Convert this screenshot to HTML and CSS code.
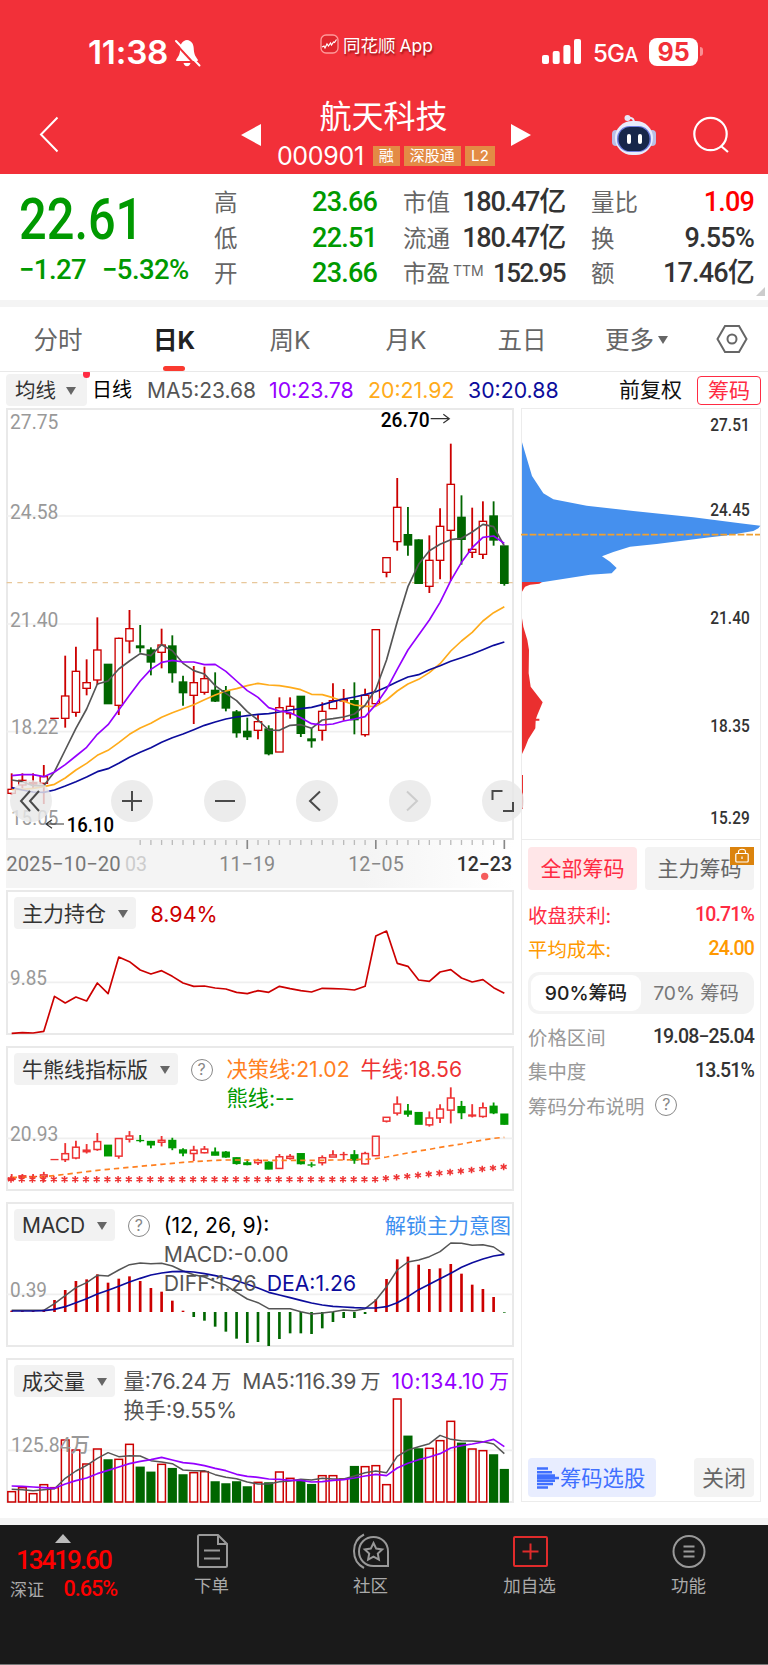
FILE: index.html
```html
<!DOCTYPE html>
<html lang="zh-CN">
<head>
    <meta charset="UTF-8">
    <meta name="viewport" content="width=device-width, initial-scale=1.0">
    <title>航天科技 000901</title>
    <link rel="stylesheet" href="styles.css">
</head>
<body>
    <header>
        <div class="status-bar">
            <div class="status-time">
                <span class="clock">11:38</span>
                <svg width="27" height="30" viewBox="0 0 27 30">
                    <path d="M13 2C8.500 2.500 6.500 6 6.300 10c-.2 6-1.500 8-4 11.500-.5 1 0 1.500 1 1.500h19.400c1 0 1.500-.5 1-1.500-2.500-3.500-3.800-5.500-4-11.500C19.500 6 17.500 2.500 13 2z" fill="#fff"/>
                    <path d="M9.500 25h7c-.5 2-1.500 3.200-3.500 3.200S10 27 9.500 25z" fill="#fff"/>
                    <path d="M1 5L23 29" stroke="#f23039" stroke-width="2"/>
                    <path d="M2 3L25.500 27.500" stroke="#fff" stroke-width="2" stroke-linecap="round"/>
                </svg>
            </div>
            <div class="status-app">
                <svg width="19" height="20" viewBox="0 0 19 20">
                    <rect x="1" y="1" width="17" height="18" rx="5" fill="#e0262e" stroke="#ff9a9a" stroke-width="1.300"/>
                    <path d="M2 13l2-1 1 2 2-4 1.500 2 2-3 1 2 2-3 1 .5 2-3" fill="none" stroke="#fff" stroke-width="1.200"/>
                </svg>
                <span>同花顺 App</span>
            </div>
            <div class="status-right">
                <svg width="40" height="26" viewBox="0 0 40 26" fill="#fff">
                    <rect x="0" y="16" width="7" height="9" rx="2"/>
                    <rect x="10.700" y="12" width="7" height="13" rx="2"/>
                    <rect x="21.400" y="6" width="7" height="19" rx="2"/>
                    <rect x="32" y="0" width="7" height="25" rx="2"/>
                </svg>
                <span class="net">5G<small>A</small></span>
                <span class="battery">95</span>
                <i class="battery-cap"></i>
            </div>
        </div>

        <nav class="title-bar">
            <svg class="back" width="20" height="37" viewBox="0 0 20 37"><path d="M18.500 1.500L2 18.500l16.500 17" fill="none" stroke="#fff" stroke-width="2"/></svg>
            <div class="stock">
                <i class="prev"></i>
                <div class="stock-name">
                    <h1>航天科技</h1>
                    <div class="stock-code">
                        <span class="code">000901</span>
                        <span class="tag">融</span>
                        <span class="tag">深股通</span>
                        <span class="tag">L2</span>
                    </div>
                </div>
                <i class="next"></i>
            </div>
            <div class="actions">
                <svg width="44" height="42" viewBox="0 0 44 42">
                    <circle cx="15.500" cy="4" r="3" fill="#e6e8f8"/>
                    <path d="M16 4c5-1 6 2 6 5" fill="none" stroke="#e6e8f8" stroke-width="2"/>
                    <rect x="0" y="16" width="8" height="16" rx="4" fill="#b9bfe6"/>
                    <rect x="36" y="16" width="8" height="16" rx="4" fill="#b9bfe6"/>
                    <rect x="3" y="7" width="38" height="34" rx="17" fill="#e9ecfb"/>
                    <rect x="5" y="12" width="34" height="26" rx="12.500" fill="#6f7fe0"/>
                    <rect x="6.500" y="13" width="31" height="24" rx="11.500" fill="#17264a"/>
                    <rect x="15" y="20" width="4" height="10" rx="2" fill="#fff"/>
                    <rect x="26" y="20" width="4" height="10" rx="2" fill="#fff"/>
                </svg>
                <svg width="38" height="38" viewBox="0 0 38 38" fill="none" stroke="#fff" stroke-width="2.200">
                    <circle cx="17.500" cy="18" r="16.200"/>
                    <path d="M28 30l7 6"/>
                </svg>
            </div>
        </nav>
    </header>

    <section class="quote">
        <div class="price">
            <div class="last"><span>22.61</span></div>
            <div class="change"><span>−1.27</span><span>−5.32%</span></div>
        </div>
        <dl class="facts c1">
            <dt>高</dt><dd class="down">23.66</dd>
            <dt>低</dt><dd class="down">22.51</dd>
            <dt>开</dt><dd class="down">23.66</dd>
        </dl>
        <dl class="facts c2">
            <dt>市值</dt><dd>180.47亿</dd>
            <dt>流通</dt><dd>180.47亿</dd>
            <dt>市盈<sup>TTM</sup></dt><dd>152.95</dd>
        </dl>
        <dl class="facts c3">
            <dt>量比</dt><dd class="up">1.09</dd>
            <dt>换</dt><dd>9.55%</dd>
            <dt>额</dt><dd>17.46亿</dd>
        </dl>
        <i class="corner"></i>
    </section>

    <nav class="tabs">
        <span>分时</span>
        <span class="active">日K</span>
        <span>周K</span>
        <span>月K</span>
        <span>五日</span>
        <span>更多<i class="caret"></i></span>
        <svg width="32" height="30" viewBox="0 0 32 30" fill="none" stroke="#666" stroke-width="2">
            <path d="M9 2h14l7.500 13L23 28H9L1.500 15z"/>
            <circle cx="16" cy="15" r="4.500"/>
        </svg>
    </nav>

    <div class="ma-row">
        <span class="select">均线<i class="caret"></i></span>
        <i class="new-dot"></i>
        <span class="period">日线</span>
        <span class="ma5">MA5:23.68</span>
        <span class="ma10">10:23.78</span>
        <span class="ma20">20:21.92</span>
        <span class="ma30">30:20.88</span>
        <span class="adjust">前复权</span>
        <span class="chips-btn">筹码</span>
    </div>

    <main>
        <div class="charts">
            <div class="panel kline">
                <svg id="kline" viewBox="18 24 1524 1296"></svg>
                <div class="tools">
                    <button><svg viewBox="0 0 42 42"><path d="M20 11L11 21l9 10M29 11l-9 10 9 10"/></svg></button>
                    <button><svg viewBox="0 0 42 42"><path d="M21 11v20M11 21h20"/></svg></button>
                    <button><svg viewBox="0 0 42 42"><path d="M11 21h20"/></svg></button>
                    <button><svg viewBox="0 0 42 42"><path d="M24 11.500L14 21l10 9.500"/></svg></button>
                    <button class="off"><svg viewBox="0 0 42 42"><path d="M18 11.500L28 21l-10 9.500"/></svg></button>
                    <button><svg viewBox="0 0 42 42"><path d="M10.500 20v-9h10M31 22v9H21"/></svg></button>
                </div>
            </div>
            <div class="dates">
                <svg id="dates" viewBox="18 1320 1524 144"></svg>
            </div>

            <div class="panel sub">
                <svg id="position" viewBox="18 30 1524 435"></svg>
                <div class="panel-head">
                    <span class="select">主力持仓<i class="caret"></i></span>
                    <span class="legend holding">8.94%</span>
                </div>
            </div>

            <div class="panel sub">
                <svg id="bullbear" viewBox="18 18 1524 435"></svg>
                <div class="panel-head">
                    <span class="select">牛熊线指标版<i class="caret"></i></span>
                    <i class="help">?</i>
                    <div class="legend bull">
                        <div><span class="decision">决策线:21.02</span><span class="bull-line">牛线:18.56</span></div>
                        <div><span class="bear-line">熊线:--</span></div>
                    </div>
                </div>
            </div>

            <div class="panel sub">
                <svg id="macd" viewBox="18 21 1524 435"></svg>
                <div class="panel-head">
                    <span class="select">MACD<i class="caret"></i></span>
                    <i class="help">?</i>
                    <div class="legend macd">
                        <div class="params">(12, 26, 9):</div>
                        <div>MACD:-0.00</div>
                        <div><span>DIFF:1.26</span><span class="ma30">DEA:1.26</span></div>
                    </div>
                    <span class="unlock">解锁主力意图</span>
                </div>
            </div>

            <div class="panel sub">
                <svg id="volume" viewBox="18 24 1524 435"></svg>
                <div class="panel-head">
                    <span class="select">成交量<i class="caret"></i></span>
                    <div class="legend vol">
                        <div><span>量:76.24<b>万</b></span><span>MA5:116.39<b>万</b></span><span class="ma10">10:134.10<b>万</b></span></div>
                        <div>换手:9.55%</div>
                    </div>
                </div>
            </div>
        </div>

        <aside class="chips">
            <svg id="chips" viewBox="33 24 720 1296"></svg>
            <div class="chips-body">
                <div class="scope">
                    <span class="on">全部筹码</span>
                    <span>主力筹码<i class="lock"><svg width="14" height="15" viewBox="0 0 14 15" fill="none" stroke="#fff" stroke-width="1.200"><rect x=".8" y="5.500" width="12.400" height="8.500" rx="1"/><path d="M3.500 5.500V3.800C3.500.4 10.500.4 10.500 3.800v1.700M7 8.500v2.500"/></svg></i></span>
                </div>
                <div class="row profit"><span>收盘获利:</span><em>10.71%</em></div>
                <div class="row cost"><span>平均成本:</span><em>24.00</em></div>
                <div class="segment"><span class="on">90%筹码</span><span>70% 筹码</span></div>
                <div class="row"><span>价格区间</span><em>19.08−25.04</em></div>
                <div class="row"><span>集中度</span><em>13.51%</em></div>
                <div class="row note"><span>筹码分布说明</span><i class="help">?</i></div>
                <div class="chips-foot">
                    <span class="pick">
                        <svg width="23" height="22" viewBox="0 0 23 22" stroke="#4070ff" stroke-width="2.400">
                            <path d="M0 1.500h11M0 5.200h15M0 8.500h18M0 11h22M0 13.800h18M0 17h16M0 20.500h11"/>
                        </svg>筹码选股</span>
                    <span class="close">关闭</span>
                </div>
            </div>
        </aside>
    </main>

    <footer>
        <div class="index">
            <i class="up-arrow"></i>
            <div class="index-value">13419.60</div>
            <div class="index-row"><span>深证</span><em>0.65%</em></div>
        </div>
        <div class="menu">
            <div class="item">
                <svg width="38" height="36" viewBox="0 0 38 36" fill="none" stroke="#999" stroke-width="2">
                    <path d="M25 2H6.500Q5 2 5 3.500v29Q5 34 6.500 34h26Q34 34 34 32.500V11zM25 2v9h9M11 17.500h16M11 25.500h16"/>
                </svg>
                <span>下单</span>
            </div>
            <div class="item">
                <svg width="38" height="36" viewBox="0 0 38 36" fill="none" stroke="#999" stroke-width="2">
                    <path d="M36 33H21.500C13 33 7 26.500 7 18.500 7 10 13.500 4 21.500 4S36 10 36 18.500z"/>
                    <path d="M12 1.500C5 5 2 11 2 18s3.500 13.500 10 17"/>
                    <path d="M21.500 10l2.700 5.600 6 .8-4.400 4.200 1.100 6-5.400-2.900-5.400 2.900 1.100-6-4.400-4.200 6-.8z"/>
                </svg>
                <span>社区</span>
            </div>
            <div class="item">
                <svg width="38" height="36" viewBox="0 0 38 36" fill="none" stroke="#e02b2b" stroke-width="2">
                    <rect x="3" y="4" width="33" height="29" rx="1"/>
                    <path d="M19.500 10.500v16M11.500 18.500h16"/>
                </svg>
                <span>加自选</span>
            </div>
            <div class="item">
                <svg width="38" height="36" viewBox="0 0 38 36" fill="none" stroke="#999" stroke-width="2">
                    <circle cx="19" cy="18.500" r="15.500"/>
                    <path d="M13.500 13.500h11M13.500 18.500h11M13.500 23.500h11"/>
                </svg>
                <span>功能</span>
            </div>
        </div>
    </footer>

    <script src="charts.js"></script>
</body>
</html>
```
FILE: styles.css
```css
* {
    margin: 0;
    padding: 0;
    box-sizing: border-box;
}

body {
    width: 768px;
    font-family: Inter, "Noto Sans CJK SC", sans-serif;
    background-color: #fff;
    color: #333;
}

svg {
    display: block;
    flex: none;
}

i, em {
    font-style: normal;
}

header {
    height: 174px;
    background-color: #f23039;
    color: #fff;
}

.status-bar {
    height: 95px;
    display: grid;
    grid-template-columns: 320px 222px 1fr;
}

.status-time {
    display: flex;
    align-items: center;
    gap: 7px;
    padding: 10px 0 0 88px;
}

.clock {
    width: 79px;
    font-size: 32px;
    font-weight: 600;
    letter-spacing: -0.2px;
    transform: scaleX(1.04);
    transform-origin: left;
}

.status-app {
    display: flex;
    align-items: center;
    gap: 4px;
    height: 88px;
    font-size: 17.5px;
    word-spacing: -1px;
    text-shadow: 1px 2px 2px rgba(90, 0, 0, 0.6);
}

.status-right {
    display: flex;
    align-items: center;
    padding-top: 8px;
}

.net {
    width: 55px;
    padding: 3px 0 0 11px;
    font-size: 24px;
    font-weight: 500;
    letter-spacing: -0.8px;
}

.net small {
    font-size: 20px;
}

.battery {
    width: 49px;
    height: 28px;
    margin-left: 12px;
    border-radius: 8px;
    background-color: #fff;
    color: #f23039;
    font-size: 25px;
    font-weight: 700;
    line-height: 28px;
    text-align: center;
}

.battery-cap {
    width: 3px;
    height: 9px;
    margin-left: 2px;
    border-radius: 0 4px 4px 0;
    background-color: #f98f94;
}

.title-bar {
    height: 79px;
    display: grid;
    grid-template-columns: 241px 290px 1fr;
    align-items: center;
}

.back {
    margin-left: 39px;
}

.stock {
    display: flex;
    justify-content: space-between;
    align-items: center;
}

.prev, .next {
    border: solid transparent;
    border-width: 11px 0;
}

.prev {
    border-right: 20px solid #fff;
}

.next {
    border-left: 20px solid #fff;
}

.stock-name {
    display: flex;
    flex-direction: column;
    align-items: center;
}

.stock-name h1 {
    height: 42px;
    margin-right: 5px;
    font-size: 32px;
    font-weight: 400;
    line-height: 36px;
}

.stock-code {
    display: flex;
    align-items: center;
    height: 30px;
}

.code {
    margin-right: 9px;
    font-size: 25px;
    letter-spacing: -0.3px;
}

.tag {
    height: 20px;
    margin-right: 4px;
    padding: 0 6px;
    background-color: #e38b45;
    font-size: 15px;
    line-height: 20px;
}

.tag:last-child {
    margin-right: 0;
    letter-spacing: 0.3px;
}

.actions {
    display: flex;
    align-items: center;
    gap: 37px;
    padding-left: 81px;
}

/* quote */
.quote {
    position: relative;
    display: flex;
    height: 133px;
    border-bottom: 7px solid #f4f4f4;
}

.price {
    width: 214px;
    padding-left: 19px;
    color: #009900;
    font-family: Roboto, sans-serif;
    font-weight: 500;
}

.last {
    height: 71px;
    padding-top: 10px;
    font-size: 58px;
    line-height: 70px;
}

.last span {
    display: inline-block;
    transform: scaleX(0.84);
    transform-origin: left;
}

.change {
    display: flex;
    gap: 16px;
    padding-top: 9px;
    font-size: 27.5px;
    line-height: 32px;
    letter-spacing: -0.6px;
}

.facts {
    display: grid;
    grid-template-rows: repeat(3, 35.5px);
    align-items: center;
    padding-top: 11px;
    height: 118px;
}

.c1 {
    width: 163px;
    grid-template-columns: 40px 1fr;
}

.c2 {
    width: 162px;
    margin-left: 26px;
    grid-template-columns: 48px minmax(0, 1fr);
}

.c3 {
    width: 163px;
    margin-left: 26px;
    grid-template-columns: 48px 1fr;
}

.facts dt {
    color: #666;
    font-size: 23.5px;
    line-height: 35px;
    white-space: nowrap;
}

.facts dt sup {
    margin-left: 3px;
    font-size: 14px;
    line-height: 0;
    vertical-align: 6px;
}

.facts dd {
    font-family: Roboto, "Noto Sans CJK SC", sans-serif;
    font-size: 27px;
    font-weight: 500;
    line-height: 35px;
    letter-spacing: -0.8px;
    text-align: right;
    white-space: nowrap;
}

.facts.c2 dd {
    letter-spacing: -1.2px;
}

.facts.c2 dd:last-child {
    font-size: 26px;
    letter-spacing: -1.5px;
}

.facts .down {
    color: #009900;
}

.facts .up {
    color: #ff0000;
}

.corner {
    position: absolute;
    right: 3px;
    bottom: 4px;
    border-left: 9px solid transparent;
    border-bottom: 9px solid #ccc;
}

/* tabs */
.tabs {
    display: flex;
    align-items: center;
    height: 65px;
    padding: 0 20px 0 0;
    border-bottom: 1px solid #e9e9e9;
    color: #666;
    font-size: 24.5px;
}

.tabs > span {
    position: relative;
    width: 116px;
    text-align: center;
    line-height: 66px;
    height: 64px;
}

.tabs > span:nth-child(6) {
    width: 113px;
}

.tabs svg {
    margin-left: auto;
}

.tabs .active {
    color: #222;
    font-weight: 700;
}

.tabs .active::after {
    content: "";
    position: absolute;
    left: 47px;
    bottom: 0;
    width: 22px;
    height: 5px;
    border-radius: 3px;
    background-color: #fa3a30;
}

.caret {
    display: inline-block;
    border: solid transparent;
    border-width: 0 5.5px;
    border-top: 8px solid #666;
    vertical-align: 3px;
}

.tabs .caret {
    margin-left: 4px;
    vertical-align: 5px;
}

.ma-row {
    display: flex;
    align-items: center;
    height: 36px;
    padding: 0 7px 0 6px;
    font-size: 21.3px;
    white-space: nowrap;
}

.select {
    height: 32px;
    padding: 0 8px 0 8px;
    border-radius: 4px;
    background-color: #f2f2f2;
    color: #333;
    font-size: 21px;
    line-height: 33px;
    white-space: nowrap;
}

.select .caret {
    margin-left: 11.5px;
}

.ma-row .select {
    width: 81px;
    padding-left: 9px;
    font-size: 20.5px;
}

.ma-row .select .caret {
    margin-left: 10px;
}

.new-dot {
    align-self: flex-start;
    width: 7px;
    height: 6px;
    margin: 0 2px 0 -4px;
    border-radius: 1px 1px 5px 5px;
    background-color: #ff2b43;
}

.period {
    width: 55px;
    color: #000;
    font-size: 20px;
    line-height: 30px;
}

.ma5 {
    width: 122px;
    color: #555;
    font-size: 21px;
}

.ma-row .ma10 {
    width: 99px;
}

.ma20 {
    width: 100px;
    color: #ffab1a;
}

.ma10 {
    color: #9500ff;
}

.ma30 {
    color: #0c0c9c;
}

.adjust {
    margin-left: auto;
    color: #111;
    font-size: 21px;
    line-height: 30px;
}

.chips-btn {
    width: 64px;
    height: 29px;
    margin-left: 15px;
    border: 1.5px solid #ff2b43;
    border-radius: 4px;
    color: #ff2b43;
    font-size: 21px;
    line-height: 27px;
    text-align: center;
}

/* charts */
main {
    display: flex;
    justify-content: space-between;
    height: 1110px;
    padding: 0 7px 0 6px;
}

.charts {
    width: 508px;
}

.panel {
    position: relative;
    border: 2px solid #e9e9e9;
}

.panel > svg {
    position: absolute;
    top: -2px;
    left: -2px;
    width: 508px;
}

.kline {
    height: 432px;
}

.sub {
    height: 145px;
    margin-bottom: 11px;
}

.tools {
    position: absolute;
    top: 370px;
    left: 2px;
    display: flex;
    width: 514px;
    justify-content: space-between;
    z-index: 1;
}

.tools button {
    width: 42px;
    height: 42px;
    border: none;
    border-radius: 50%;
    background-color: rgba(232, 232, 232, 0.82);
}

.tools button:first-child {
    margin-right: 8px;
}

.tools path {
    fill: none;
    stroke: #4a4a4a;
    stroke-width: 2;
}

.tools .off path {
    stroke: #ccc;
}

.dates {
    height: 50px;
    padding-bottom: 2px;
    background: linear-gradient(to right, #f4f4f4 70%, #fff) content-box;
}

.dates svg {
    overflow: visible;
}

.panel-head {
    position: relative;
    display: flex;
    align-items: flex-start;
    padding: 5px 0 0 6px;
}

.legend {
    padding-top: 2px;
    font-size: 21.2px;
    line-height: 29px;
    color: #555;
    white-space: nowrap;
}

.legend div {
    height: 29px;
}

.legend b {
    margin-left: 4px;
    font-size: 20px;
    font-weight: 400;
}

.legend.holding {
    margin-left: 15px;
    padding-top: 1px;
    color: #cc0000;
    line-height: 33px;
    font-size: 21.5px;
}

.help {
    display: block;
    width: 22px;
    height: 22px;
    margin: 6px 0 0 13px;
    border: 1.5px solid #888;
    border-radius: 50%;
    color: #888;
    font-size: 16px;
    line-height: 19px;
    text-align: center;
}

.bull {
    margin-left: 14px;
}

.bull-line {
    margin-left: 11px;
    color: #ee3333;
}

.decision {
    color: #ff7f1f;
}

.bear-line {
    color: #009900;
}

.macd {
    margin-left: 14px;
}

.macd .params {
    color: #000;
}

.macd .ma30 {
    margin-left: 10px;
}

.unlock {
    margin: 0 1px 0 auto;
    color: #3d8ff0;
    font-size: 21px;
    line-height: 33px;
}

.vol {
    margin-left: 9px;
}

.vol span {
    margin-right: 11px;
}

.vol .ma10 {
    margin-right: 0;
    letter-spacing: 0.5px;
}

/* chip distribution */
.chips {
    width: 240px;
    height: 1094px;
    border: 1.5px solid #ececec;
    border-top: none;
}

#chips {
    width: 240px;
    height: 432px;
    margin-left: -1px;
}

.chips-body {
    display: flex;
    flex-direction: column;
    height: 660px;
    padding: 7px 6px 3px;
}

.scope {
    display: flex;
    justify-content: space-between;
    margin-bottom: 7px;
}

.scope span {
    position: relative;
    width: 109px;
    height: 43px;
    border-radius: 4px;
    background-color: #f3f3f3;
    color: #666;
    font-size: 21px;
    line-height: 43px;
    text-align: center;
}

.scope .on {
    background-color: #ffe6e8;
    color: #ff2b43;
}

.lock {
    position: absolute;
    top: 0;
    right: 0;
    width: 24px;
    height: 18px;
    padding: 1px 5px;
    background-color: #db830d;
}

.row {
    display: flex;
    justify-content: space-between;
    align-items: center;
    height: 34px;
    color: #999;
    font-size: 19.4px;
}

.row em {
    color: #333;
    font-family: Roboto, sans-serif;
    font-weight: 500;
    font-size: 19.5px;
    letter-spacing: -0.85px;
}

.profit, .profit em {
    color: #ff2b43;
}

.cost, .cost em {
    color: #ff9900;
}

.segment {
    display: flex;
    height: 42px;
    margin: 7px 0 5px;
    padding: 3px;
    border-radius: 11px;
    background-color: #f3f3f3;
    color: #777;
    font-size: 19.3px;
    line-height: 37px;
    text-align: center;
}

.segment span {
    width: 110px;
}

.segment .on {
    border-radius: 9px;
    background-color: #fff;
    color: #222;
    font-weight: 500;
}

.note {
    justify-content: flex-start;
    height: 36px;
}

.note .help {
    margin: 0 0 0 11px;
}

.chips-foot {
    display: flex;
    justify-content: space-between;
    margin-top: auto;
}

.chips-foot span {
    height: 39px;
    border-radius: 4px;
    background-color: #f3f3f3;
    color: #666;
    font-size: 22px;
    line-height: 40px;
}

.chips-foot .pick {
    display: flex;
    align-items: center;
    width: 128px;
    padding-left: 9px;
    background-color: #e8edff;
    color: #4070ff;
    font-size: 21.3px;
}

.chips-foot .close {
    width: 60px;
    text-align: center;
}

/* bottom bar */
footer {
    display: flex;
    height: 147px;
    border-top: 7px solid #f4f4f4;
    border-bottom: 1px solid #777;
    background-color: #1a1a1a;
    color: #aaa;
}

.index {
    width: 137px;
    padding: 9px 0 0 10px;
    font-family: Roboto, "Noto Sans CJK SC", sans-serif;
}

.up-arrow {
    display: block;
    width: 16px;
    margin-left: 45px;
    border: solid transparent;
    border-width: 0 8px;
    border-bottom: 9px solid #bbb;
}

.index-value {
    height: 32px;
    padding-left: 6px;
    color: #ff0000;
    font-size: 26px;
    font-weight: 500;
    line-height: 35px;
    letter-spacing: -2px;
}

.index-row {
    display: flex;
    align-items: center;
    justify-content: space-between;
    width: 107px;
    height: 26px;
    font-size: 17px;
}

.index-row em {
    color: #ff0000;
    font-size: 21.5px;
    font-weight: 500;
    letter-spacing: -1px;
}

.menu {
    display: flex;
    flex: 1;
    margin-left: -2px;
}

.item {
    display: flex;
    flex-direction: column;
    align-items: center;
    width: 159px;
    padding-top: 8px;
    font-size: 17.5px;
    line-height: 34px;
}
```
FILE: charts.js
```js
// All y values are in chart units, three units per pixel.
const X0 = 35, STEP = 32.13;
const RED = '#cc0000', GREEN = '#006600';
const xAt = i => X0 + i * STEP;

// [up?, high, body top, body bottom, low]
const candles = [
    [1,1120,1168,1180,1185],[1,1120,1141,1155,1165],[1,1120,1148,1152,1165],[1,1095,1130,1150,1212],
    [1,955,955,955,955],[1,767,888,955,983],[1,740,814,937,950],[1,778,848,865,886],
    [1,652,750,840,855],[0,793,793,911,911],[1,713,715,916,945],[1,630,686,723,760],
    [0,675,738,743,758],[0,742,750,786,826],[1,686,735,757,805],[0,706,738,818,848],
    [0,827,846,878,917],[1,798,848,886,972],[1,800,836,877,884],[0,817,871,903,906],
    [0,858,872,924,934],[0,930,936,998,1013],[0,953,994,1010,1020],[1,945,965,991,1018],
    [0,976,987,1061,1066],[1,892,923,1056,1056],[1,892,919,941,956],[0,889,889,1000,1011],
    [0,985,1017,1022,1043],[1,907,934,991,1022],[1,850,902,926,926],[1,867,898,903,962],
    [0,847,902,959,1003],[1,866,886,1004,1010],[1,688,689,911,911],[1,473,473,517,532],
    [1,234,322,425,452],[0,321,404,435,467],[0,418,420,550,550],[1,406,481,559,579],
    [1,325,379,481,538],[1,131,253,391,543],[0,286,352,418,494],[1,323,448,457,474],
    [1,304,364,463,477],[0,304,348,420,437],[0,438,438,550,557]
];
const ma5 = [1140,1145,1157,1157,1115,1050,985,927,852,843,807,783,761,767,734,752,790,812,822,857,880,902,935,960,990,991,976,974,985,960,956,951,942,916,868,780,665,560,493,452,433,419,415,396,373,380,438];
const ma10 = [1127,1124,1124,1130,1116,1094,1068,1042,1003,974,930,886,843,808,787,781,786,786,794,793,814,843,872,892,923,933,938,953,971,975,972,963,957,950,914,868,808,750,705,660,607,542,487,443,412,408,430];
const ma20 = [1168,1168,1165,1160,1153,1134,1110,1090,1066,1051,1028,1003,984,970,952,938,926,914,899,885,873,866,857,850,855,857,862,869,883,884,893,904,915,919,919,900,873,852,838,818,791,753,723,697,663,638,620];
const ma30 = [1163,1170,1176,1177,1170,1158,1145,1131,1115,1106,1090,1072,1057,1043,1027,1013,1002,989,976,966,957,951,947,943,941,936,930,926,922,914,905,897,891,884,875,861,845,831,824,809,797,784,773,762,749,736,726];

const position = [460,458,459,454,349,369,351,363,309,341,231,245,270,282,272,289,309,319,318,324,327,337,341,332,337,319,326,332,336,325,326,327,330,319,168,153,250,259,300,304,276,269,294,306,299,323,340];

const macdBars = [347,348,348,344,315,285,258,253,238,263,251,244,258,279,290,317,347,366,377,395,410,431,444,441,453,432,415,415,417,400,381,369,369,357,313,252,193,185,209,222,220,207,236,269,282,306,353];
const diff = [346,346,346,346,326,302,278,263,241,243,225,209,204,206,205,213,228,239,246,260,271,292,312,323,341,341,341,350,357,354,350,345,347,341,316,275,225,201,195,185,170,144,145,151,149,156,178];
const dea = [348,348,348,347,343,335,323,311,297,286,274,261,250,240,234,230,229,231,236,242,249,257,268,279,292,300,308,316,324,330,334,336,338,339,339,335,323,305,284,268,251,235,217,203,192,183,178];

const volume = [424,412,430,403,412,269,299,341,296,329,327,282,351,366,342,355,374,367,364,395,401,395,410,396,398,365,384,391,403,376,376,386,349,349,346,403,146,258,296,294,271,213,279,296,301,314,358];
const volUp = '11111111101100100110000101100111011110011101100';
const volMa5 = [418,419,422,419,416,385,363,346,325,308,320,317,318,332,336,341,360,362,362,374,382,386,396,402,402,395,393,388,390,385,387,387,378,368,363,368,319,300,290,281,256,268,272,273,275,282,311];
const volMa10 = [408,409,411,413,415,402,392,384,371,361,351,341,334,329,322,330,338,341,347,355,362,373,379,382,387,388,391,391,396,395,391,389,384,378,373,377,354,340,329,321,311,294,287,282,276,268,290];

function line(values, color, width = 5) {
    const pts = values.map((y, i) => xAt(i).toFixed(1) + ',' + y).join(' ');
    return `<polyline points="${pts}" fill="none" stroke="${color}" stroke-width="${width}" stroke-linejoin="round"/>`;
}

function grid(ys) {
    return ys.map(y => `<path d="M20 ${y}H1538" stroke="#efefef" stroke-width="5"/>`).join('');
}

function label(text, x, y, width, color = '#999', size = 61, weight = 450) {
    return `<text x="${x}" y="${y}" font-family="Roboto, 'Noto Sans CJK SC', sans-serif" font-size="${size}" font-weight="${weight}" fill="${color}" textLength="${width}" lengthAdjust="spacingAndGlyphs">${text}</text>`;
}

function drawCandles(data, half, red, green, stroke) {
    return data.map(([up, hi, top, bot, low], i) => {
        const x = xAt(i), c = up ? red : green;
        const h = Math.max(bot - top, 0);
        let s = '';
        if (hi < top) s += `<path d="M${x} ${hi}V${top}" stroke="${c}" stroke-width="5.5"/>`;
        if (low > bot) s += `<path d="M${x} ${bot}V${low}" stroke="${c}" stroke-width="5.5"/>`;
        if (h < 2) return s + `<path d="M${x - half} ${top}H${x + half}" stroke="${c}" stroke-width="4"/>`;
        return s + `<rect x="${x - half + 2}" y="${top}" width="${2 * half - 4}" height="${h}" fill="${up ? 'none' : c}" stroke="${c}" stroke-width="${stroke}"/>`;
    }).join('');
}

const put = (id, html) => { document.getElementById(id).innerHTML = html; };

put('kline',
    grid([348, 672, 995]) +
    `<path d="M20 548H1538" stroke="#e8c79a" stroke-width="4" stroke-dasharray="16 16"/>` +
    label('27.75', 30, 87, 145) + label('24.58', 30, 356, 145) + label('21.40', 30, 680, 145) +
    label('18.22', 33, 1003, 142) + label('15.05', 33, 1274, 142) +
    drawCandles(candles, 13, RED, GREEN, 4) +
    line(ma20, '#ffab1a') + line(ma30, '#0c0c9c') + line(ma5, '#555') + line(ma10, '#9500ff') +
    label('26.70', 1142, 80, 147, '#000', 61, 500) +
    `<path d="M1292 56h56m-18-13l18 13-18 13" fill="none" stroke="#333" stroke-width="3.5"/>` +
    label('16.10', 200, 1296, 142, '#000', 61, 500) +
    `<path d="M192 1272h-54m18-13l-18 13 18 13" fill="none" stroke="#333" stroke-width="3.5"/>`);

let ticks = '';
for (let i = 12; i < 47; i++) {
    const major = i === 22 || i === 34 || i === 46;
    ticks += `<path d="M${xAt(i)} 1320v${major ? 27 : 15}" stroke="${major ? '#888' : '#bbb'}" stroke-width="${major ? 5 : 4}"/>`;
}
put('dates', ticks +
    label('2025−10−20', 19, 1413, 343, '#777') + label('03', 375, 1413, 66, '#ccc') +
    label('11−19', 658, 1413, 167, '#888') + label('12−05', 1045, 1413, 166, '#888') +
    label('12−23', 1370, 1413, 166, '#333', 61, 500) +
    `<circle cx="1454" cy="1429" r="11" fill="#f55c5c"/>`);

put('position', grid([307]) + label('9.85', 30, 316, 111) + line(position, RED));

// same bars as the main chart on a flatter scale
const flat = y => 142 + (y - 131) * 0.263;
const decision = [412,412,411,410,407,403,399,395,391,388,385,382,379,376,373,370,367,365,363,361,360,360,360,361,361,361,361,361,361,361,360,360,359,358,356,351,345,339,333,328,322,317,312,306,300,295,292];
let stars = '';
for (let i = 0; i < 47; i++) {
    const x = xAt(i) - 2, y = i < 35 ? 418 : 418 - (i - 34) * 3.1;
    stars += `<path d="M${x} ${y - 10}v20M${x - 9} ${y - 5}l18 10M${x - 9} ${y + 5}l18-10" stroke="#ee3333" stroke-width="4.5"/>`;
}
put('bullbear', grid([295]) + label('20.93', 30, 303, 145) +
    drawCandles(candles.map(c => [c[0], ...c.slice(1).map(flat)]), 12, '#ee3333', '#009900', 4.5) +
    line(decision, '#ff7f1f').replace('/>', ' stroke-dasharray="16 12"/>') + stars);

put('macd', grid([298]) + label('0.39', 30, 305, 111) +
    macdBars.map((y, i) => `<path d="M${xAt(i)} 351V${y}" stroke="${y < 351 ? RED : GREEN}" stroke-width="8"/>`).join('') +
    line(diff, '#555', 4.5) + line(dea, '#0c0c9c'));

put('volume', grid([301]) +
    volume.map((y, i) => {
        const up = volUp[i] === '1';
        return `<rect x="${xAt(i) - 11.5}" y="${y + 1}" width="23" height="${455 - y}" fill="${up ? 'none' : GREEN}" stroke="${up ? RED : GREEN}" stroke-width="4.5"/>`;
    }).join('') +
    line(volMa5, '#555', 4.5) + line(volMa10, '#9500ff') + label('125.84万', 33, 307, 237));

const axis = (t, y) => label(t, 601, y, 118, '#333', 54, 500);
put('chips',
    `<path d="M33 24H750" stroke="#ececec" stroke-width="6"/><path d="M33 1319H753" stroke="#ececec" stroke-width="4"/>` +
    `<path d="M36 127L66 228 100 280 130 298 230 317 370 333 550 352 690 370 751 377 745 385 730 393 660 405 600 412 440 432 360 440 310 456 276 469 300 485 320 504 305 520 240 524 96 547H36z" fill="#4590ee"/>` +
    `<path d="M36 546H96L88 551 60 554 45 560 36 575zM36 655L40 680 52 720 57 750 56 820 62 860 98 907 82 945 78 956H88V962H77L76 985 55 1018 45 1043 36 1062zM36 1125h3v102h-3z" fill="#ea2f2f"/>` +
    `<path d="M33 404H750" stroke="#f0a030" stroke-width="5" stroke-dasharray="20 6"/>` +
    axis('27.51', 94) + axis('24.45', 349) + axis('21.40', 673) + axis('18.35', 996) + axis('15.29', 1272));
```
